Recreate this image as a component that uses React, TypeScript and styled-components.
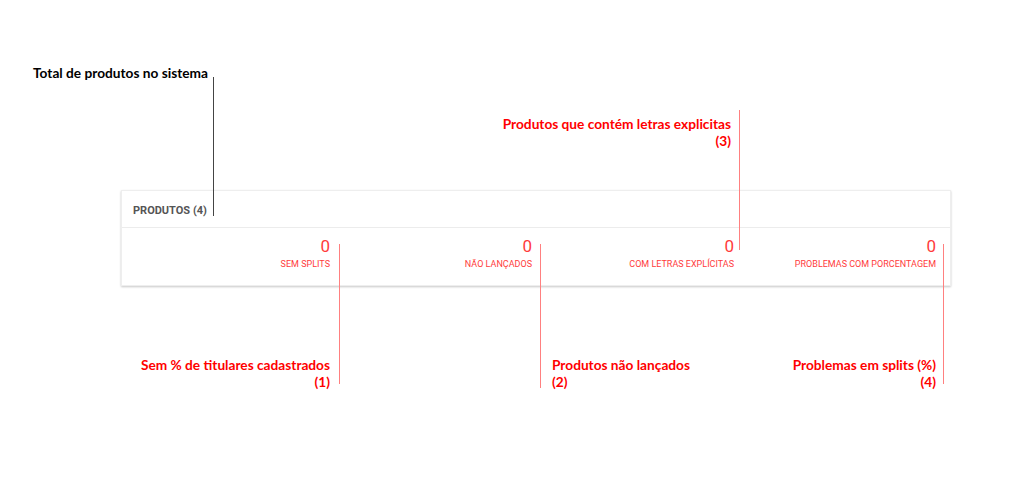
import React from "react";
import styled, { createGlobalStyle, css } from "styled-components";

const Global = createGlobalStyle`
  html, body { margin: 0; padding: 0; background: #fff; }
  body { width: 1024px; height: 502px; overflow: hidden; }
`;

const RED = "#ff0000";
const RED_LINE = "#ff8080";

const Page = styled.main`
  width: 1024px;
  height: 502px;
  padding-top: 64px;
  box-sizing: border-box;
  display: flex;
  flex-direction: column;
  font-family: Roboto, "Liberation Sans", sans-serif;
`;

const Note = styled.p<{ $color?: string; $align?: "left" | "right" }>`
  margin: 0;
  font-family: Lato, "Open Sans", sans-serif;
  font-weight: 700;
  font-size: 13.7px;
  line-height: 17px;
  color: ${(p) => p.$color ?? RED};
  text-align: ${(p) => p.$align ?? "right"};
  white-space: nowrap;
`;

const TotalNote = styled(Note)`
  margin-left: 33px;
`;

const ExplicitNote = styled(Note)`
  width: 731px;
  margin-top: 34px;
`;

const Card = styled.section`
  width: 830px;
  margin: 41px 0 0 121px;
  background: #fff;
  border: 1px solid #eeeeee;
  box-sizing: border-box;
  box-shadow: 0 1px 2px rgba(0, 0, 0, 0.22);
`;

const CardHeader = styled.header`
  height: 37px;
  display: flex;
  align-items: center;
  padding: 2px 0 0 11px;
  box-sizing: border-box;
  border-bottom: 1px solid #ececec;
`;

const HeaderTitle = styled.h2`
  position: relative;
  width: 75px;
  margin: 0;
  font-size: 11px;
  font-weight: 700;
  color: #555;
  white-space: nowrap;

  &::after {
    content: "";
    position: absolute;
    left: 80px;
    bottom: 1px;
    width: 1px;
    height: 139px;
    background: #444;
  }
`;

const StatsGrid = styled.div`
  display: grid;
  grid-template-columns: repeat(4, 202px);
  padding: 8px 14px 12px 6px;
  height: 57px;
  box-sizing: border-box;
`;

const Stat = styled.div<{ $lead: "up" | "down"; $offset: number; $length: number }>`
  position: relative;
  display: flex;
  flex-direction: column;
  align-items: flex-end;
  color: #ff3b3b;

  &::after {
    content: "";
    position: absolute;
    width: 1px;
    background: ${RED_LINE};
    right: ${(p) => -p.$offset}px;
    height: ${(p) => p.$length}px;
    ${(p) =>
      p.$lead === "down"
        ? css`
            top: 8px;
          `
        : css`
            bottom: 23px;
          `}
  }
`;

const StatValue = styled.span`
  font-size: 17px;
  line-height: 20px;
  font-weight: 400;
`;

const StatLabel = styled.span`
  font-size: 9px;
  line-height: 12px;
  margin-top: 2px;
  text-transform: uppercase;
`;

const BottomNotes = styled.div`
  width: 830px;
  margin: 70px 0 0 121px;
  display: grid;
  grid-template-columns: repeat(4, 202px);
  padding: 0 12px 0 7px;
  box-sizing: border-box;
`;

const LeftNote = styled(Note)`
  padding-left: 20px;
`;

type StatData = {
  value: number;
  label: string;
  lead: "up" | "down";
  offset: number;
  length: number;
};

const stats: StatData[] = [
  { value: 0, label: "Sem splits", lead: "down", offset: 10, length: 140 },
  { value: 0, label: "Não lançados", lead: "down", offset: 9, length: 144 },
  { value: 0, label: "Com letras explícitas", lead: "up", offset: 6, length: 140 },
  { value: 0, label: "Problemas com porcentagem", lead: "down", offset: 8, length: 140 },
];

export default function App() {
  return (
    <>
      <Global />
      <Page>
        <TotalNote $color="#000" $align="left">
          Total de produtos no sistema
        </TotalNote>
        <ExplicitNote>
          Produtos que contém letras explicitas
          <br />
          (3)
        </ExplicitNote>

        <Card>
          <CardHeader>
            <HeaderTitle>PRODUTOS (4)</HeaderTitle>
          </CardHeader>
          <StatsGrid>
            {stats.map((s) => (
              <Stat key={s.label} $lead={s.lead} $offset={s.offset} $length={s.length}>
                <StatValue>{s.value}</StatValue>
                <StatLabel>{s.label}</StatLabel>
              </Stat>
            ))}
          </StatsGrid>
        </Card>

        <BottomNotes>
          <Note>
            Sem % de titulares cadastrados
            <br />
            (1)
          </Note>
          <span />
          <LeftNote $align="left">
            Produtos não lançados
            <br />
            (2)
          </LeftNote>
          <Note>
            Problemas em splits (%)
            <br />
            (4)
          </Note>
        </BottomNotes>
      </Page>
    </>
  );
}
